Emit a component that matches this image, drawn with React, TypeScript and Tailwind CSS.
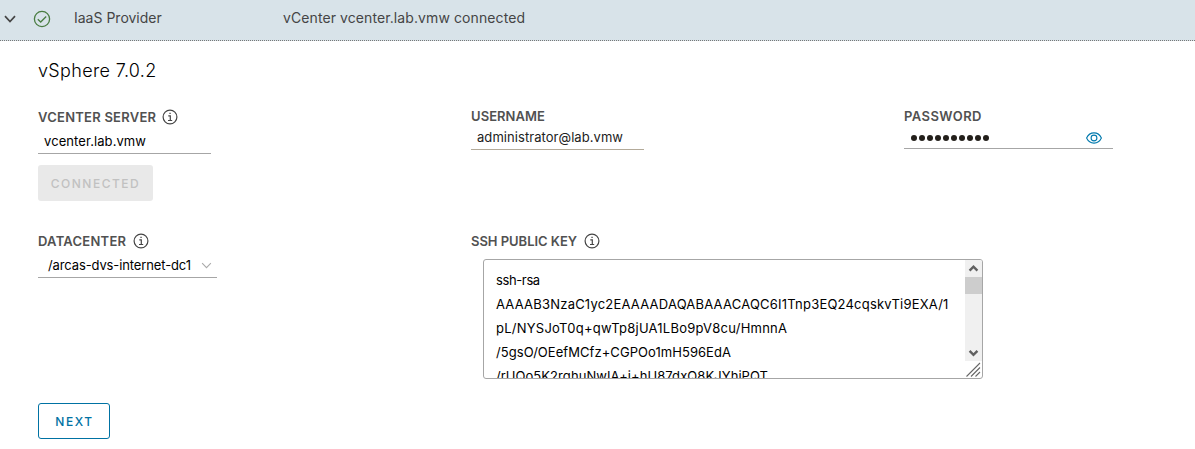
import type { ReactNode } from "react";

function InfoIcon() {
  return (
    <svg className="size-4 shrink-0" viewBox="0 0 16 16" fill="none" stroke="#454545" strokeWidth="1.2">
      <circle cx="8" cy="8" r="6.9" />
      <path d="M6.3 6.8h2v4.6M6 11.5h4.2" />
      <path d="M7.4 4.4h1.3" strokeWidth="1.4" />
    </svg>
  );
}

function Label({ children, className, info = false }: { children: ReactNode; className: string; info?: boolean }) {
  return (
    <div className="flex h-4 items-center gap-[7px] text-[13px] leading-4 font-semibold text-[#515151]">
      <span className={"shrink-0 whitespace-nowrap " + className}>{children}</span>
      {info && <InfoIcon />}
    </div>
  );
}

function Chevron({ className }: { className: string }) {
  return (
    <svg className={className} viewBox="0 0 12 8" fill="none" stroke="currentColor">
      <path d="M1 1.2 6 6.500l5-5.300" />
    </svg>
  );
}

function KeyArea() {
  return (
    <div className="ml-3 flex h-[120px] w-[500px] overflow-hidden rounded-[3px] border border-[#a6a6a6] bg-white">
      <div className="flex-1 overflow-hidden pt-2 pl-3 text-[13px] leading-6 whitespace-nowrap text-black">
        <p className="tracking-[-0.38px]">ssh-rsa</p>
        <p className="tracking-[0.210px]">AAAAB3NzaC1yc2EAAAADAQABAAACAQC6I1Tnp3EQ24cqskvTi9EXA/1</p>
        <p className="tracking-[0.239px]">pL/NYSJoT0q+qwTp8jUA1LBo9pV8cu/HmnnA</p>
        <p className="tracking-[0.056px]">/5gsO/OEefMCfz+CGPOo1mH596EdA</p>
        <p className="tracking-[0.071px]">/rUQo5K2rghuNwIA+j+hU87dxQ8KJYhiPQT</p>
      </div>
      <div className="flex w-[17px] shrink-0 flex-col">
        <div className="flex h-[101px] flex-col items-center bg-[#f0f0f0] text-[#606060]">
          <svg className="h-[17px] w-[17px] shrink-0" viewBox="0 0 17 17" fill="none" stroke="currentColor" strokeWidth="2.4">
            <path d="m4.600 10.600 3.900-4 3.900 4" />
          </svg>
          <div className="h-[17px] w-full bg-[#cdcdcd]" />
          <svg className="mt-auto h-[17px] w-[17px] shrink-0" viewBox="0 0 17 17" fill="none" stroke="currentColor" strokeWidth="2.4">
            <path d="m4.600 6.800 3.900 4 3.900-4" />
          </svg>
        </div>
        <svg className="h-[17px] w-[17px]" viewBox="0 0 17 17" fill="none" stroke="#686868" strokeWidth="1.1">
          <path d="M1.500 15.500 15 2M6 15.500l9-9M10.500 15.500 15 11" />
        </svg>
      </div>
    </div>
  );
}

export default function App() {
  return (
    <div className="h-[449px] overflow-hidden bg-white font-['Inter',sans-serif]">
      <header className="flex h-[41px] items-start border-b border-dotted border-[#777] bg-[#d8e3e9] text-sm leading-5 text-[#454545]">
        <Chevron className="mt-[15px] ml-1 h-2 w-3 stroke-[1.7]" />
        <svg className="mt-[10px] ml-[17px] size-[18px]" viewBox="0 0 18 18" fill="none" stroke="#4a7d42" strokeWidth="1.3">
          <circle cx="9" cy="9" r="7.600" />
          <path d="m4.800 9.200 2.900 2.800 5.500-5.500" />
        </svg>
        <span className="mt-2 ml-[23px] w-[209px] whitespace-nowrap">IaaS Provider</span>
        <span className="mt-2 tracking-[0.092px] whitespace-nowrap">vCenter vcenter.lab.vmw connected</span>
      </header>

      <main className="pl-[38px]">
        <h2 className="pt-[18px] text-[18px] leading-6 font-light tracking-[0.35px] text-black">vSphere 7.0.2</h2>

        <div className="mt-[25px] grid h-[125px] grid-cols-[433px_433px_1fr]">
          <div className="pt-px">
            <Label className="w-[117px] tracking-[0.24px]" info>VCENTER SERVER</Label>
            <div className="mt-1 h-[25px] w-[173px] border-b border-[#a6a6a6] pl-1.5 text-[13px] leading-6 tracking-[0.088px] text-black">
              vcenter.lab.vmw
            </div>
            <button className="mt-[11px] flex h-9 w-[115px] items-center justify-center rounded-[3px] bg-[#e9e9e9] pt-px text-xs font-medium tracking-[1.51px] text-[#c1c1c1]">
              CONNECTED
            </button>
          </div>
          <div>
            <Label className="tracking-[0.06px]">USERNAME</Label>
            <div className="mt-px h-[25px] w-[173px] border-b border-[#b3aa99] pl-1.5 text-[13px] leading-6 tracking-[0.06px] text-[#222]">
              administrator@lab.vmw
            </div>
          </div>
          <div>
            <Label className="tracking-[0.42px]">PASSWORD</Label>
            <div className="mt-px flex h-6 w-[209px] items-center border-b border-[#a6a6a6] pt-[3px] pl-[7px]">
              <div className="flex gap-[2px]">
                {Array.from({ length: 10 }, (_, i) => (
                  <span key={i} className="size-1.5 rounded-full bg-[#231f1b]" />
                ))}
              </div>
              <svg className="mr-[11px] ml-auto h-3 w-4" viewBox="0 0 16 12" fill="none" stroke="#0079ad" strokeWidth="1.1">
                <path d="M.6 6C2.200 2.600 4.800.9 8 .9s5.800 1.700 7.400 5.100C13.800 9.400 11.200 11.100 8 11.100S2.200 9.400.6 6Z" />
                <circle cx="8" cy="6" r="2.900" />
              </svg>
            </div>
          </div>
        </div>

        <div className="grid h-[170px] grid-cols-[433px_1fr]">
          <div>
            <Label className="w-[88px] tracking-[0.24px]" info>DATACENTER</Label>
            <div className="mt-1 flex h-[25px] w-[179px] items-center border-b border-[#a6a6a6] pl-2.5 text-[13px] leading-6 tracking-[-0.12px] text-black">
              /arcas-dvs-internet-dc1
              <Chevron className="mr-[5px] ml-auto h-[7px] w-[11px] stroke-[1.2] text-[#aaa]" />
            </div>
          </div>
          <div>
            <Label className="w-[106px] tracking-[-0.038px]" info>SSH PUBLIC KEY</Label>
            <div className="mt-[10px]">
              <KeyArea />
            </div>
          </div>
        </div>

        <button className="flex h-9 w-[72px] items-center justify-center rounded-[3px] border border-[#0072a3] pt-px pl-px text-xs font-medium tracking-[1.635px] text-[#0072a3]">
          NEXT
        </button>
      </main>
    </div>
  );
}
